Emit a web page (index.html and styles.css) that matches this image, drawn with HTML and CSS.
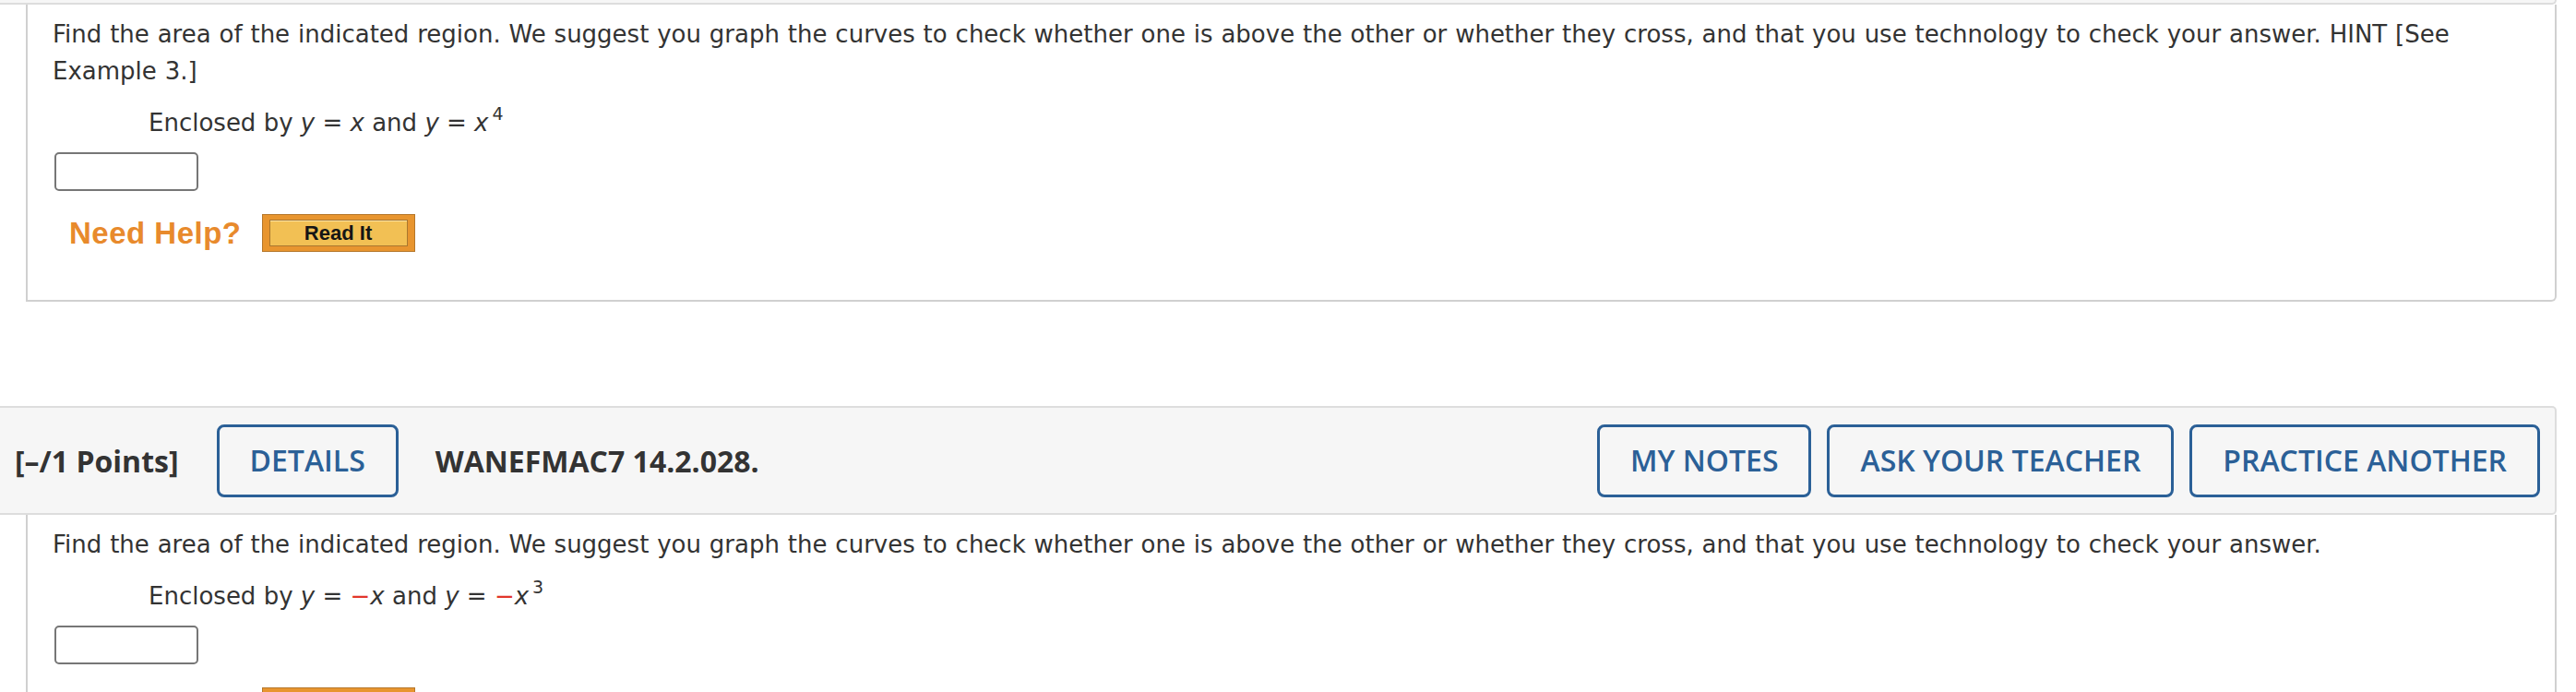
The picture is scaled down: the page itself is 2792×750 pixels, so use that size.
FILE: index.html
```html
<!DOCTYPE html>
<html lang="en">
<head>
<meta charset="utf-8">
<title>Questions</title>
<link rel="stylesheet" href="styles.css">
</head>
<body>
<div class="page">
  <section class="question q1">
    <div class="qhead stub"></div>
    <div class="qbody">
      <p class="prompt">Find the area of the indicated region. We suggest you graph the curves to check whether one is above the other or whether they cross, and that you use technology to check your answer. HINT [See Example 3.]</p>
      <div class="eq">Enclosed by <i>y</i> = <i>x</i> and <i>y</i> = <i>x</i><sup>4</sup></div>
      <input class="ans" type="text" aria-label="answer">
      <div class="help">
        <span class="need">Need Help?</span>
        <button class="readit" type="button"><span class="readit-in">Read It</span></button>
      </div>
    </div>
  </section>

  <section class="question q2">
    <div class="qhead">
      <span class="points">[–/1 Points]</span>
      <button class="hbtn details" type="button">DETAILS</button>
      <span class="qid">WANEFMAC7 14.2.028.</span>
      <div class="hactions">
        <button class="hbtn" type="button">MY NOTES</button>
        <button class="hbtn" type="button">ASK YOUR TEACHER</button>
        <button class="hbtn" type="button">PRACTICE ANOTHER</button>
      </div>
    </div>
    <div class="qbody">
      <p class="prompt">Find the area of the indicated region. We suggest you graph the curves to check whether one is above the other or whether they cross, and that you use technology to check your answer.</p>
      <div class="eq">Enclosed by <i>y</i> = <span class="neg">−</span><i>x</i> and <i>y</i> = <span class="neg">−</span><i>x</i><sup>3</sup></div>
      <input class="ans" type="text" aria-label="answer">
      <div class="help">
        <span class="need">Need Help?</span>
        <button class="readit" type="button"><span class="readit-in">Read It</span></button>
      </div>
    </div>
  </section>
</div>
</body>
</html>
```

FILE: styles.css
```css
html, body {
  margin: 0;
  padding: 0;
  background: #ffffff;
}

.page {
  width: 2771px;
  font-family: "DejaVu Sans", Verdana, sans-serif;
  color: #333333;
}

.question + .question {
  margin-top: 113px;
}

.qhead {
  background: #f6f6f6;
  border: 2px solid #dddddd;
  border-left: 0;
  border-radius: 0 5px 5px 0;
  box-sizing: border-box;
}

.qhead.stub {
  height: 5px;
  border-top: 0;
  border-radius: 0 0 5px 0;
}

.q2 .qhead {
  height: 118px;
  display: flex;
  align-items: center;
  padding: 0 16px 0 16px;
  font-family: "Open Sans", "DejaVu Sans", sans-serif;
  font-size: 32px;
  color: #333333;
}

.points,
.qid {
  font-weight: 700;
  white-space: nowrap;
}

.hbtn {
  box-sizing: border-box;
  height: 79px;
  padding: 0 33px;
  border: 3px solid #2b6097;
  border-radius: 8px;
  background: transparent;
  color: #2b6097;
  font-family: "Open Sans", "DejaVu Sans", sans-serif;
  font-weight: 600;
  font-size: 32px;
  line-height: 1;
  white-space: nowrap;
  cursor: pointer;
}

.details {
  margin: 0 40px 0 41px;
}

.hactions {
  margin-left: auto;
  display: flex;
  gap: 17px;
}

.qbody {
  margin-left: 28px;
  border: 2px solid #d0d0d0;
  border-top: 0;
  border-radius: 0 0 6px 0;
  padding: 12px 60px 52px 27px;
  font-size: 26px;
  line-height: 40px;
}

.prompt {
  margin: 0;
  word-spacing: 0.6px;
}

.eq {
  margin-top: 16px;
  padding-left: 104px;
  white-space: nowrap;
}

.eq i {
  font-style: italic;
}

.eq sup {
  font-size: 19px;
  line-height: 0;
  vertical-align: 12px;
  margin-left: 4px;
}

.neg {
  color: #e2362b;
}

.ans {
  display: block;
  box-sizing: border-box;
  width: 156px;
  height: 42px;
  margin: 12px 0 0 2px;
  border: 2px solid #767676;
  border-radius: 5px;
  background: #ffffff;
  padding: 0 6px;
  font: inherit;
}

.help {
  margin: 25px 0 0 18px;
  display: flex;
  align-items: center;
  gap: 22px;
  height: 41px;
}

.need {
  font-family: "Liberation Sans", Arial, sans-serif;
  font-weight: 700;
  font-size: 33px;
  letter-spacing: 0.5px;
  line-height: 1;
  color: #e88a2c;
}

.readit {
  box-sizing: border-box;
  width: 166px;
  height: 41px;
  padding: 5px 7px;
  border: 1px solid #b5772b;
  background: #e8952f;
  display: flex;
  cursor: pointer;
}

.readit-in {
  flex: 1;
  display: flex;
  align-items: center;
  justify-content: center;
  border: 1px solid #a9772e;
  box-shadow: inset 0 1px 0 #fbe3a4;
  background: #f2c054;
  font-family: "Liberation Sans", Arial, sans-serif;
  font-weight: 700;
  font-size: 22px;
  color: #151515;
}
```
